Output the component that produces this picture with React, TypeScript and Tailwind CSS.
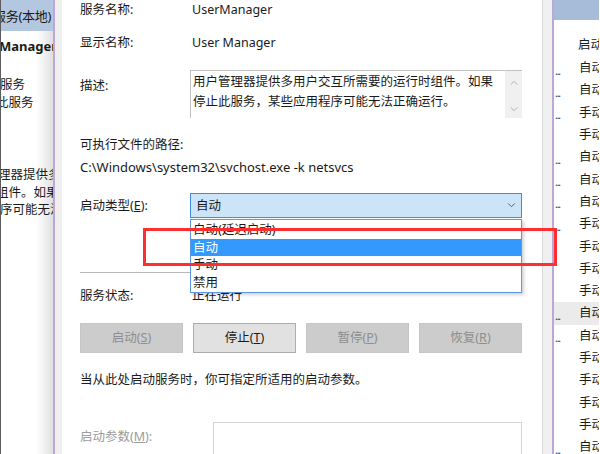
import React from "react";

const rows: { t: string; dots: boolean; hl?: boolean }[] = [
  { t: "自动", dots: true },
  { t: "自动", dots: true },
  { t: "手动", dots: true },
  { t: "手动", dots: false },
  { t: "自动", dots: true },
  { t: "自动", dots: true },
  { t: "自动", dots: true },
  { t: "手动", dots: true },
  { t: "手动", dots: false },
  { t: "手动", dots: false },
  { t: "手动", dots: false },
  { t: "自动", dots: true, hl: true },
  { t: "自动", dots: true },
  { t: "手动", dots: false },
  { t: "手动", dots: false },
  { t: "手动", dots: false },
  { t: "手动", dots: false },
  { t: "自动", dots: true },
];

function Chevron({ up, color, w = 9 }: { up?: boolean; color: string; w?: number }) {
  return (
    <svg width={w} height={Math.round(w * 0.6)} viewBox="0 0 10 6" fill="none">
      <path
        d={up ? "M1 5.5 L5 1.5 L9 5.5" : "M1 0.5 L5 4.5 L9 0.5"}
        stroke={color}
        strokeWidth="1.1"
      />
    </svg>
  );
}

export default function App() {
  return (
    <div className="relative flex w-[600px] h-[454px] overflow-hidden bg-white text-[12.5px] leading-[20px] text-[#1a1a1a] font-['Noto_Sans','Noto_Sans_CJK_SC',sans-serif]">
      {/* left background window */}
      <div className="w-[53px] shrink-0 flex flex-col overflow-hidden border-l border-[#5c5c5c] bg-[linear-gradient(to_right,#ffffff_68%,#e0e0e0)] whitespace-nowrap [&>*]:shrink-0">
        <div className="h-[31px] bg-[#b3c7e1] flex items-center">
          <span className="ml-[-8px] text-[13px] tracking-[-0.3px]">服务(本地)</span>
        </div>
        <div className="mt-[5px] h-[20px] flex items-center font-bold text-[13px]">
          <span className="ml-[-2px]">Manager</span>
        </div>
        <div className="mt-[20px] h-[17.5px] leading-[17.5px]">
          <span className="ml-[-1px]">服务</span>
        </div>
        <div className="h-[17.5px] leading-[17.5px]">
          <span className="ml-[-5px]">此服务</span>
        </div>
        <div className="mt-[55px] h-[17.5px] leading-[17.5px]">
          <span className="ml-[-3px]">理器提供多</span>
        </div>
        <div className="h-[17.5px] leading-[17.5px]">
          <span className="ml-[-5px]">组件。如果</span>
        </div>
        <div className="h-[17.5px] leading-[17.5px]">
          <span className="ml-[-1px]">序可能无法</span>
        </div>
      </div>
      <div className="w-[2px] shrink-0 bg-[#bca8d6]" />
      <div className="w-[7px] shrink-0 bg-[#f0f0f0]" />

      {/* dialog page */}
      <div className="w-[481px] shrink-0 bg-white border-r border-[#dadada] pl-[18px] pr-[20px] flex flex-col [&>*]:shrink-0">
        <div className="flex h-[20px] items-center">
          <div className="w-[110px]">服务名称:</div>
          <div className="pl-[2px]">UserManager</div>
        </div>
        <div className="mt-[13px] flex h-[20px] items-center">
          <div className="w-[110px]">显示名称:</div>
          <div className="pl-[2px]">User Manager</div>
        </div>
        <div className="mt-[17px] flex h-[48px]">
          <div className="w-[110px] pt-[6px]">描述:</div>
          <div className="flex-1 flex border-t border-l border-[#c2c2c2]">
            <div className="flex-1 pl-[2px] pt-[1px] leading-[19.5px]">
              用户管理器提供多用户交互所需要的运行时组件。如果停止此服务，某些应用程序可能无法正确运行。
            </div>
            <div className="w-[17px] bg-[#f0f0f0] flex flex-col items-center justify-between pt-[9px] pb-[6px]">
              <Chevron up color="#a8a8a8" w={8} />
              <Chevron color="#a8a8a8" w={8} />
            </div>
          </div>
        </div>
        <div className="mt-[17px] h-[20px] flex items-center">可执行文件的路径:</div>
        <div className="mt-[2px] h-[20px] flex items-center text-[13px]">
          C:\Windows\system32\svchost.exe -k netsvcs
        </div>

        <div className="mt-[16px] flex h-[25px] items-center">
          <div className="w-[110px]">
            启动类型(<u>E</u>):
          </div>
          <div className="relative flex-1 h-[25px]">
            <div className="h-full flex items-center justify-between bg-[#cce4f7] border border-[#3d8ee0] pl-[5px] pr-[5px]">
              <span>自动</span>
              <Chevron color="#555555" w={9} />
            </div>
            <div className="absolute left-0 right-0 top-[26px] z-10 bg-white border border-[#5b9ae0] shadow-[2px_2px_3px_rgba(0,0,0,0.18)] py-[1px] leading-[17.5px]">
              <div className="h-[17.5px] pl-[2px]">自动(延迟启动)</div>
              <div className="h-[17.5px] pl-[2px] bg-[#3399ff] text-white">自动</div>
              <div className="h-[17.5px] pl-[2px]">手动</div>
              <div className="h-[17.5px] pl-[2px]">禁用</div>
            </div>
          </div>
        </div>

        <div className="mt-[54px] h-px bg-[#b9b9b9]" />

        <div className="mt-[13px] flex h-[20px] items-center">
          <div className="w-[110px]">服务状态:</div>
          <div className="pl-[2px]">正在运行</div>
        </div>

        <div className="mt-[17px] grid grid-cols-4 gap-[10px] h-[30px]">
          <div className="flex items-center justify-center bg-[#cccccc] border border-[#c6c6c6] text-[#8e8e8e]">
            启动(<u>S</u>)
          </div>
          <div className="flex items-center justify-center bg-[#e1e1e1] border border-[#adadad]">
            停止(<u>T</u>)
          </div>
          <div className="flex items-center justify-center bg-[#cccccc] border border-[#c6c6c6] text-[#8e8e8e]">
            暂停(<u>P</u>)
          </div>
          <div className="flex items-center justify-center bg-[#cccccc] border border-[#c6c6c6] text-[#8e8e8e]">
            恢复(<u>R</u>)
          </div>
        </div>

        <div className="mt-[17px] h-[20px] flex items-center">
          当从此处启动服务时，你可指定所适用的启动参数。
        </div>

        <div className="mt-[32px] flex">
          <div className="w-[133px] pt-[5px] text-[#9c9c9c]">
            启动参数(<u>M</u>):
          </div>
          <div className="flex-1 h-[40px] border border-[#d6d6d6] bg-white" />
        </div>
      </div>

      <div className="w-[9px] shrink-0 bg-[#f0f0f0]" />
      <div className="w-[2px] shrink-0 bg-[#bca8d6]" />

      {/* right background window */}
      <div className="w-[45px] shrink-0 flex flex-col overflow-hidden whitespace-nowrap bg-white">
        <div className="h-[20px] shrink-0 bg-[#a6bcd9]" />
        <div className="h-[12px] shrink-0" />
        <div className="h-[25px] shrink-0 flex items-center">
          <div className="w-[18px] shrink-0" />
          <div className="w-px h-[25px] bg-[#e2e2e2]" />
          <span className="ml-[6px]">启动</span>
        </div>
        {rows.map((r, i) => (
          <div
            key={i}
            className={`h-[22.3px] shrink-0 flex items-center ${r.hl ? "bg-[#ebebeb]" : ""}`}
          >
            <div className="w-[25px] shrink-0 pl-[1px] pt-[5px] text-[10px] leading-[10px] tracking-[-1px] text-[#333]">
              {r.dots ? "..." : ""}
            </div>
            <span>{r.t}</span>
          </div>
        ))}
      </div>

      {/* red annotation box */}
      <div className="absolute left-[143px] top-[228px] w-[414px] h-[38px] border-[3px] border-[#ff2f2f] z-20 pointer-events-none" />
    </div>
  );
}
